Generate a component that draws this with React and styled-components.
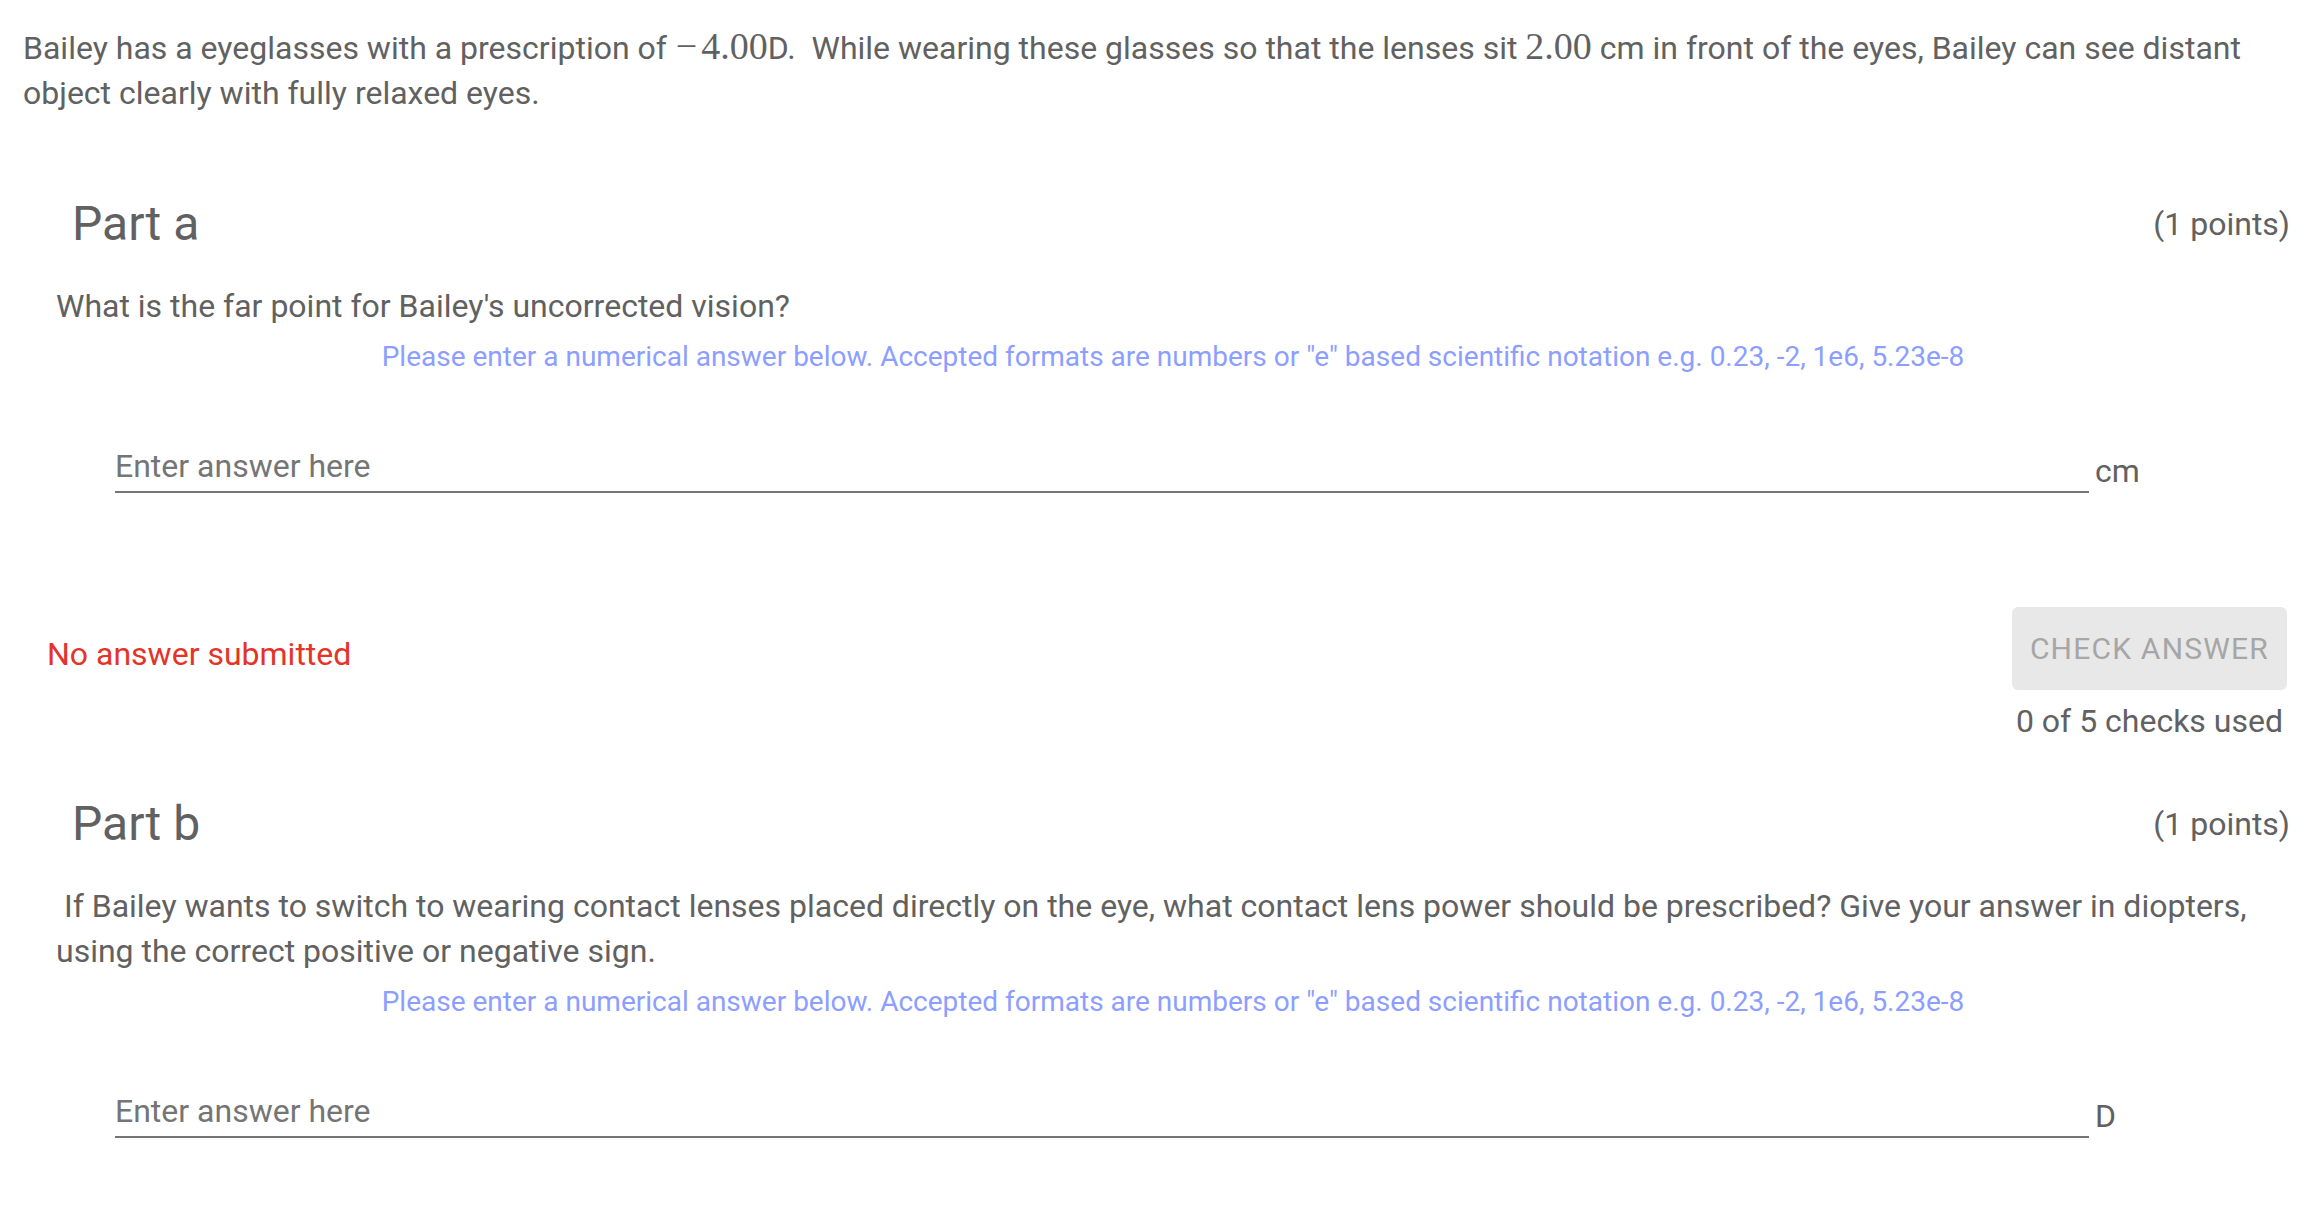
import React from 'react'
import styled, { createGlobalStyle } from 'styled-components'

const GlobalStyle = createGlobalStyle`
  body {
    margin: 0;
    background: #fff;
  }
`

const Page = styled.div`
  padding: 26px 20px 0 23px;
  color: #616161;
  font-family: Roboto, "Liberation Sans", sans-serif;
`

const Intro = styled.p`
  margin: 0 0 29px;
  font-size: 32px;
  line-height: 45px;
`

const MathNum = styled.span`
  font-family: "Liberation Serif", serif;
  font-size: 38px;
  line-height: 1;
`

const MathSign = styled.span`
  padding: 0 4px 0 1px;
`

const Part = styled.section`
  padding-top: 50px;
`

const PartHeader = styled.div`
  display: flex;
  justify-content: space-between;
  align-items: center;
`

const PartTitle = styled.h2`
  margin: 0;
  padding-left: 49px;
  font-size: 48px;
  font-weight: 400;
  line-height: 58px;
`

const Points = styled.span`
  font-size: 32px;
`

const Question = styled.div`
  margin-top: 31px;
  padding-left: 33px;
`

const Prompt = styled.p`
  margin: 0;
  font-size: 32px;
  line-height: 45px;
  white-space: pre-wrap;
`

const Hint = styled.p`
  margin: 7px 0 0;
  text-align: center;
  font-size: 28px;
  line-height: 41px;
  color: #8c9eff;
`

const AnswerRow = styled.div`
  display: flex;
  align-items: flex-end;
  margin-top: 66px;
  padding-left: 92px;
  padding-right: 125px;
`

const AnswerInput = styled.input`
  flex: 1;
  box-sizing: border-box;
  height: 50px;
  padding: 0 0 2px;
  border: none;
  border-bottom: 2px solid #757575;
  outline: none;
  background: transparent;
  font-family: Roboto, "Liberation Sans", sans-serif;
  font-size: 32px;
  color: #616161;
  &::placeholder {
    color: #757575;
    opacity: 1;
  }
`

const Unit = styled.span`
  width: 70px;
  margin-left: 6px;
  font-size: 32px;
  line-height: 44px;
`

const Footer = styled.div`
  display: flex;
  justify-content: space-between;
  align-items: flex-start;
  margin-top: 114px;
`

const Status = styled.span`
  margin-top: 25px;
  padding-left: 24px;
  font-size: 32px;
  line-height: 45px;
  color: #e53327;
`

const CheckColumn = styled.div`
  display: flex;
  flex-direction: column;
  align-items: center;
  margin-right: 3px;
`

const CheckButton = styled.button`
  height: 83px;
  padding: 0 18px;
  border: none;
  border-radius: 6px;
  background: #e8e8e8;
  color: #a6a6a6;
  font-family: Roboto, "Liberation Sans", sans-serif;
  font-size: 30px;
  letter-spacing: 1.2px;
  text-transform: uppercase;
`

const ChecksUsed = styled.span`
  margin-top: 7px;
  font-size: 32px;
  line-height: 48px;
`

const hint =
  'Please enter a numerical answer below. Accepted formats are numbers or "e" based scientific notation e.g. 0.23, -2, 1e6, 5.23e-8'

const parts = [
  {
    id: 'a',
    prompt: "What is the far point for Bailey's uncorrected vision?",
    unit: 'cm'
  },
  {
    id: 'b',
    prompt:
      ' If Bailey wants to switch to wearing contact lenses placed directly on the eye, what contact lens power should be prescribed? Give your answer in diopters, using the correct positive or negative sign.',
    unit: 'D'
  }
]

const QuestionPart = ({ part }) => (
  <Part>
    <PartHeader>
      <PartTitle>Part {part.id}</PartTitle>
      <Points>(1 points)</Points>
    </PartHeader>
    <Question>
      <Prompt>{part.prompt}</Prompt>
      <Hint>{hint}</Hint>
    </Question>
    <AnswerRow>
      <AnswerInput type="text" placeholder="Enter answer here" />
      <Unit>{part.unit}</Unit>
    </AnswerRow>
    <Footer>
      <Status>No answer submitted</Status>
      <CheckColumn>
        <CheckButton disabled>Check answer</CheckButton>
        <ChecksUsed>0 of 5 checks used</ChecksUsed>
      </CheckColumn>
    </Footer>
  </Part>
)

export default function App() {
  return (
    <Page>
      <GlobalStyle />
      <Intro>
        Bailey has a eyeglasses with a prescription of <MathNum><MathSign>−</MathSign>4.00</MathNum>D.&nbsp; While
        wearing these glasses so that the lenses sit <MathNum>2.00</MathNum> cm in front of the eyes, Bailey can see
        distant object clearly with fully relaxed eyes.
      </Intro>
      {parts.map(p => (
        <QuestionPart key={p.id} part={p} />
      ))}
    </Page>
  )
}
